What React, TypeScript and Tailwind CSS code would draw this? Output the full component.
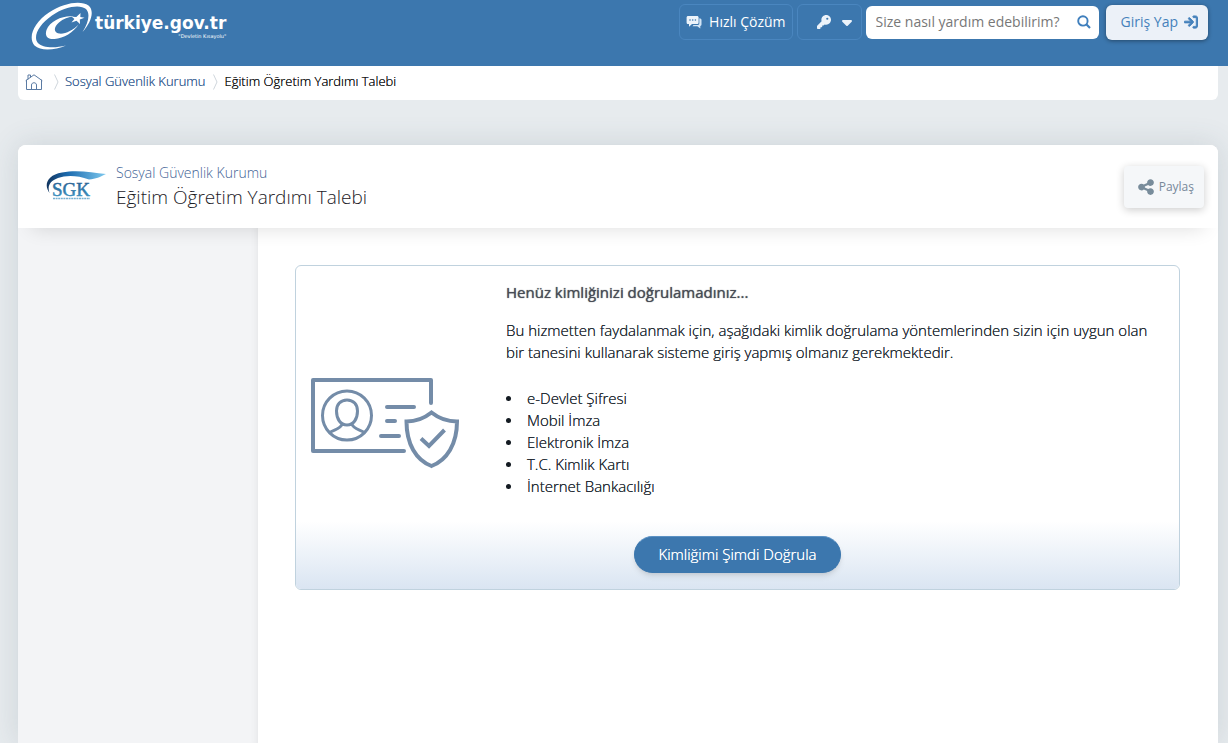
import { FaCaretDown, FaKey, FaShareNodes, FaArrowRightToBracket } from "react-icons/fa6";

const breadcrumbs = [
  { title: "Sosyal Güvenlik Kurumu", link: "#kurum" },
  { title: "Eğitim Öğretim Yardımı Talebi", link: null },
];

const loginMethods = [
  "e-Devlet Şifresi",
  "Mobil İmza",
  "Elektronik İmza",
  "T.C. Kimlik Kartı",
  "İnternet Bankacılığı",
];

function SiteLogo() {
  return (
    <a href="#anasayfa" className="flex items-center gap-0.5 text-white">
      <svg viewBox="0 0 62 48" className="h-12 w-[62px] shrink-0" aria-hidden="true">
        <path
          d="M35 43.500C24 48 10 49.500 3.500 43.500C-3.500 35 3 20.500 18 10.500C33 .5 50 -2 57.500 3.500C64 9 60 21 51.500 30C57.500 21 59.500 11.500 55 7C49 2 34 4.500 21 13.500C8 22.500 2 34 6.500 40.500C11.500 46 23 46.500 35 43.500Z"
          fill="currentColor"
        />
        <path
          d="M43 14.500C33 13 19 18.500 15.500 28C13.500 34 16.500 37.500 23.500 37C32.500 36.500 43 30 47.500 22.500C42 28.500 33.500 32.500 28 31.500C22.500 30.500 22.500 25 28 20.500C32 17 37.500 14.700 43 14.500Z"
          fill="currentColor"
        />
        <path
          d="M49.500 11L49.300 15L53.500 15.700L48.800 17.600L49 22L45.500 18.800L40.500 20.500L43.400 17L40.800 14.800L45.300 15Z"
          fill="currentColor"
        />
      </svg>
      <span className="flex flex-col items-end">
        <span className="font-['DejaVu_Sans'] text-[17px] leading-5 font-bold">türkiye.gov.tr</span>
        <span className="font-['DejaVu_Sans'] text-[5px] leading-[6px]">"Devletin Kısayolu"</span>
      </span>
    </a>
  );
}

function ChatIcon() {
  return (
    <svg viewBox="0 0 16 14" className="h-3.5 w-4" aria-hidden="true">
      <path
        d="M13.300 3.200C14.700 3.200 15.500 3.900 15.500 5V9.300C15.500 10.300 15 10.900 14.300 11V13.500L11.300 11.300H6.500L7.500 10H11.500C12.700 10 13.300 9.300 13.300 8.200Z"
        fill="#d3e5f5"
      />
      <path
        d="M2.200 1H11C12 1 12.600 1.600 12.600 2.500V7.500C12.600 8.500 12 9.100 11 9.100H6L3 11.800V9.100H2.200C1.200 9.100.6 8.500.6 7.500V2.500C.6 1.600 1.200 1 2.200 1Z"
        fill="#ecf3fa"
      />
      <g fill="#3c77ae">
        <circle cx="4" cy="5" r=".8" />
        <circle cx="6.700" cy="5" r=".8" />
        <circle cx="9.400" cy="5" r=".8" />
      </g>
    </svg>
  );
}

function SearchIcon() {
  return (
    <svg viewBox="0 0 14 14" className="size-3.5" fill="none" stroke="currentColor" aria-hidden="true">
      <circle cx="5.900" cy="5.900" r="4.700" strokeWidth="1.900" />
      <path d="M9.300 9.300L13 13" strokeWidth="2.200" />
    </svg>
  );
}

function HomeIcon() {
  return (
    <svg
      viewBox="0 0 18 18"
      className="size-[18px]"
      fill="none"
      stroke="currentColor"
      strokeLinejoin="round"
      strokeLinecap="round"
      aria-hidden="true"
    >
      <path d="M1 7.500L9 1.800L17 7.500M1.500 7.200V16.500H16.500V7.200M6.500 16.500V12C6.500 9 11.500 9 11.500 12V16.500M3 6V2H5.500V4.200" />
    </svg>
  );
}

function SgkLogo() {
  return (
    <svg viewBox="0 0 60 32" className="h-8 w-[60px] shrink-0" role="img" aria-label="SGK">
      <defs>
        <linearGradient id="swoosh">
          <stop offset="0" stopColor="#12355f" />
          <stop offset=".35" stopColor="#1b6aae" />
          <stop offset="1" stopColor="#7cc8ee" />
        </linearGradient>
        <linearGradient id="letters" x1="0" y1="0" x2="0" y2="1">
          <stop offset="0" stopColor="#235588" />
          <stop offset="1" stopColor="#3f9cc9" />
        </linearGradient>
      </defs>
      <path
        d="M3.500 22C-2.500 14 1 4 16 1.500C31 -1.500 46 1.500 60 3C54 6 50 8 43 8.500C31 4 20 4 12 7C4 10 1 15 3.500 22Z"
        fill="url(#swoosh)"
      />
      <text
        x="6"
        y="25"
        fontFamily="Liberation Serif, serif"
        fontSize="19"
        fill="url(#letters)"
        stroke="url(#letters)"
        strokeWidth=".5"
      >
        SGK
      </text>
      <path d="M7 27.500H44" stroke="#78b1d2" strokeWidth="1.500" strokeDasharray="2 .6" />
    </svg>
  );
}

function IdentityIllustration() {
  return (
    <svg viewBox="0 0 150 92" className="h-[92px] w-[150px]" fill="none" stroke="#748ca8" aria-hidden="true">
      <path d="M94 73H3V2H121V25" strokeWidth="4" strokeLinejoin="round" strokeLinecap="round" />
      <circle cx="37" cy="37.500" r="24.500" strokeWidth="3" />
      <path
        d="M37 22C43.500 22 47.500 26.500 47.500 33C47.500 41 43.500 47 37 47C30.500 47 26.500 41 26.500 33C26.500 26.500 30.500 22 37 22ZM32 46C31 51 24 51.500 19.500 54.500M42 46C43 51 50 51.500 54.500 54.500"
        strokeWidth="3"
      />
      <path d="M77 29H104M77 43H85M71 58H89" strokeWidth="4" strokeLinecap="round" />
      <path
        d="M121.500 34.500C114 40.500 106 43.500 96.500 43.500C96.500 66 106 82 121.500 88C137 82 147 66 147 43.500C137.500 43.500 129 40.500 121.500 34.500Z"
        strokeWidth="4"
      />
      <path d="M111 60.500L119 68L134.500 52" strokeWidth="4" />
    </svg>
  );
}

function Header() {
  return (
    <header className="flex h-[66px] shrink-0 items-start justify-between bg-[#3c77ae] pr-5 pl-[31px]">
      <div className="pt-0.5">
        <SiteLogo />
      </div>
      <div className="flex h-11 items-center gap-1">
        <button className="flex h-9 items-center gap-[7px] rounded-md border border-[#4a86bf] px-1.5 text-sm text-white">
          <ChatIcon />
          Hızlı Çözüm
        </button>
        <button
          aria-label="Erişim seçenekleri"
          className="flex h-9 w-[65px] items-center justify-end gap-2 rounded-md border border-[#4a86bf] pr-1.5 text-[#ecf3fa]"
        >
          <FaKey className="size-3.5" />
          <FaCaretDown className="h-4 w-4" />
        </button>
        <form className="flex h-[33px] w-[233px] items-center rounded-md bg-white pr-2 pl-2.5" role="search">
          <input
            type="search"
            aria-label="Arama"
            placeholder="Size nasıl yardım edebilirim?"
            className="min-w-0 flex-1 text-sm text-gray-700 outline-none placeholder:text-[#777]"
          />
          <button type="submit" aria-label="Ara" className="text-[#3f7fbd]">
            <SearchIcon />
          </button>
        </form>
        <button className="ml-[3px] flex h-[35px] items-center gap-1.5 rounded-md bg-[#ecf1f8] px-2.5 pl-[15px] text-sm text-[#4581bb] shadow-[0_1px_4px_rgba(0,0,0,0.4)]">
          Giriş Yap
          <FaArrowRightToBracket className="size-3.5 stroke-current stroke-[32px]" />
        </button>
      </div>
    </header>
  );
}

function Breadcrumb() {
  return (
    <nav
      aria-label="Sayfa yolu"
      className="flex h-[34px] shrink-0 items-center rounded-b-md bg-white pb-0.5 pl-[7px] text-[13px] font-light text-shadow-[0_0_0_currentColor]"
    >
      <a href="#anasayfa" aria-label="Ana sayfa" className="mr-[3px] text-[#5b7ba3]">
        <HomeIcon />
      </a>
      {breadcrumbs.map((item) => (
        <div key={item.title} className="flex items-center">
          <svg viewBox="0 0 5 16" className="mr-1.5 ml-2 h-4 w-[5px]" fill="none" stroke="#cfd6dc" aria-hidden="true">
            <path d="M.5 .5L4 8L.5 15.500" />
          </svg>
          {item.link ? (
            <a href={item.link} className="text-[#3a6294]">
              {item.title}
            </a>
          ) : (
            <span className="text-[#111]">{item.title}</span>
          )}
        </div>
      ))}
    </nav>
  );
}

function AuthCard() {
  return (
    <section className="overflow-hidden rounded-md border border-[#c0d2de]">
      <div className="flex">
        <div className="w-[210px] shrink-0 self-end pb-[27px] pl-3.5">
          <IdentityIllustration />
        </div>
        <div className="flex-1 pt-[15px] pr-4 text-[15px] leading-[22px] font-light text-[#222a32] text-shadow-[0_0_0_currentColor]">
          <h2 className="font-medium text-[#484c55] text-shadow-[0_0_1px_currentColor]">
            Henüz kimliğinizi doğrulamadınız...
          </h2>
          <p className="mt-4">
            Bu hizmetten faydalanmak için, aşağıdaki kimlik doğrulama yöntemlerinden sizin için uygun olan bir
            tanesini kullanarak sisteme giriş yapmış olmanız gerekmektedir.
          </p>
          <ul className="mt-6">
            {loginMethods.map((method) => (
              <li
                key={method}
                className="flex items-center before:mr-4 before:size-[5px] before:rounded-full before:bg-[#141b22]"
              >
                {method}
              </li>
            ))}
          </ul>
        </div>
      </div>
      <div className="mt-6 flex justify-center bg-linear-to-b from-white to-[#dae5f2] pt-[15px] pb-4">
        <button className="h-[37px] rounded-full border border-[#3c77ae] border-t-[#5b91c4] bg-[#3c77ae] px-[23px] text-[15px] font-light text-white shadow-md text-shadow-[0_0_0_currentColor]">
          Kimliğimi Şimdi Doğrula
        </button>
      </div>
    </section>
  );
}

export default function App() {
  return (
    <div className="flex min-h-screen flex-col bg-[#e7ebee] font-['Open_Sans',sans-serif]">
      <Header />
      <div className="flex flex-1 flex-col pr-2.5 pl-[18px]">
        <Breadcrumb />
        <main className="mt-[45px] flex flex-1 flex-col rounded-t-lg bg-white shadow-[0_0_30px_rgba(60,90,100,0.16)]">
          <div className="relative flex h-[83px] items-center justify-between rounded-t-lg bg-white pr-3.5 pl-7 shadow-[0_14px_20px_-14px_rgba(0,0,0,0.14)]">
            <div className="flex items-center gap-2.5">
              <SgkLogo />
              <div className="font-light">
                <a href="#kurum" className="block text-sm leading-5 text-[#3f6395]">
                  Sosyal Güvenlik Kurumu
                </a>
                <h1 className="text-[19px] leading-7 text-[#1c2026]">Eğitim Öğretim Yardımı Talebi</h1>
              </div>
            </div>
            <button className="flex h-[42px] items-center gap-1 rounded bg-[#f5f7f9] px-2.5 pl-[13px] text-xs text-[#778899] shadow-[0_2px_8px_rgba(0,0,0,0.2)]">
              <FaShareNodes className="size-[18px] text-[#788c9b]" />
              Paylaş
            </button>
          </div>
          <div className="flex flex-1">
            <aside className="w-60 shrink-0 bg-[#f3f4f6] shadow-[inset_-8px_0_8px_-8px_rgba(0,0,0,0.08)]" />
            <div className="min-w-0 flex-1 px-[38px] pt-[37px] pb-10 pl-[37px]">
              <AuthCard />
            </div>
          </div>
        </main>
      </div>
    </div>
  );
}
